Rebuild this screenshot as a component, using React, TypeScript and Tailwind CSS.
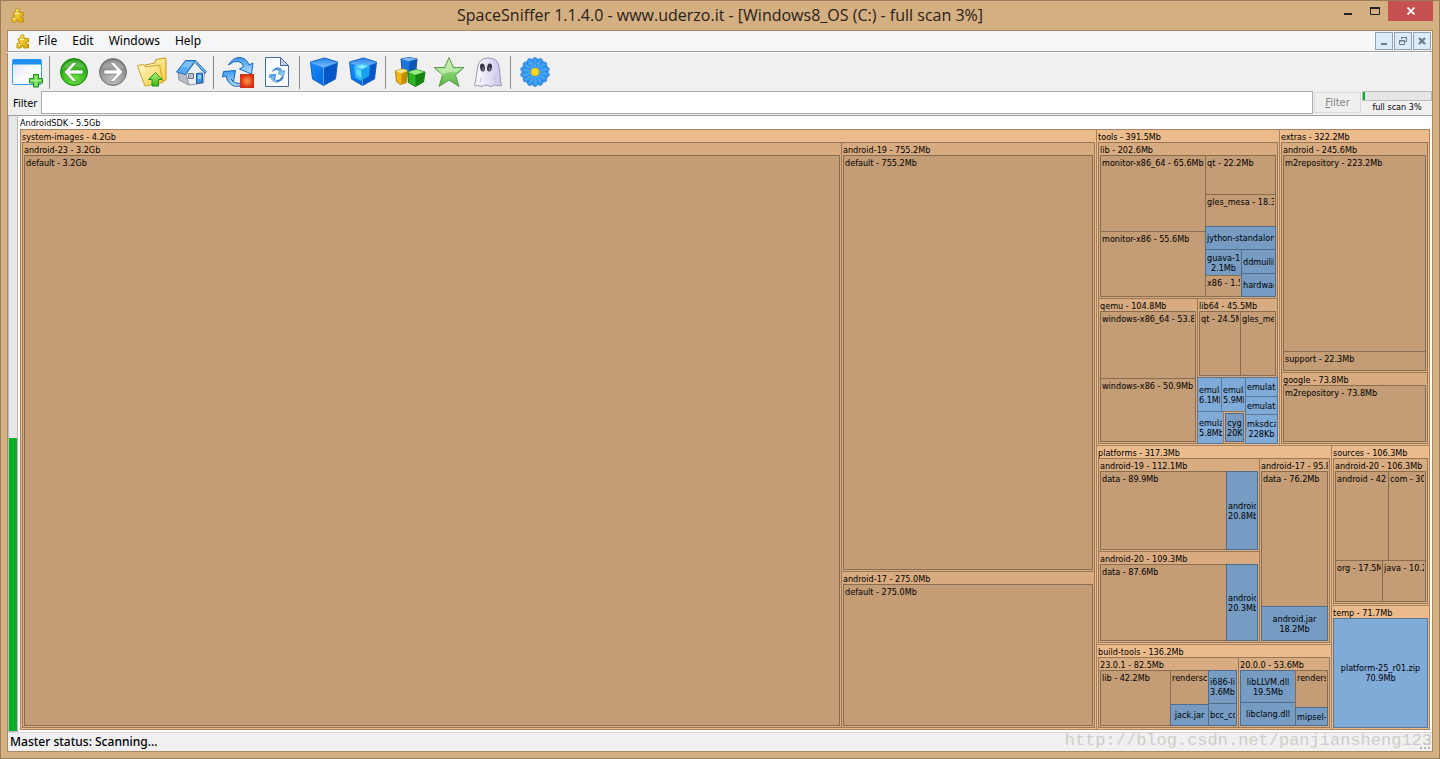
import type { ReactNode } from "react";

type MapNode = {
  size: number;
  name?: string;
  lines?: string[];
  split?: "row" | "col";
  children?: MapNode[];
};

// plain container that only splits space, draws nothing
const row = (size: number, ...children: MapNode[]): MapNode => ({ size, split: "row", children });
const col = (size: number, ...children: MapNode[]): MapNode => ({ size, split: "col", children });
const folder = (size: number, name: string, ...children: MapNode[]): MapNode => ({ size, name, children });
const file = (size: number, ...lines: string[]): MapNode => ({ size, lines });

const tree = row(
  1,
  folder(
    1077,
    "system-images - 4.2Gb",
    row(
      1,
      folder(820, "android-23 - 3.2Gb", folder(1, "default - 3.2Gb")),
      col(
        254,
        folder(430, "android-19 - 755.2Mb", folder(1, "default - 755.2Mb")),
        folder(157, "android-17 - 275.0Mb", folder(1, "default - 275.0Mb")),
      ),
    ),
  ),
  col(
    334,
    row(
      317,
      folder(
        184,
        "tools - 391.5Mb",
        col(
          1,
          folder(
            157,
            "lib - 202.6Mb",
            row(
              1,
              col(106, folder(77, "monitor-x86_64 - 65.6Mb"), folder(66, "monitor-x86 - 55.6Mb")),
              col(
                71,
                folder(40, "qt - 22.2Mb"),
                folder(33, "gles_mesa - 18.3Mb"),
                file(24, "jython-standalone"),
                row(
                  48,
                  col(37, file(27, "guava-18", "2.1Mb"), folder(22, "x86 - 1.5Mb")),
                  col(35, file(25, "ddmuilib"), file(24, "hardware")),
                ),
              ),
            ),
          ),
          row(
            146,
            folder(
              100,
              "qemu - 104.8Mb",
              col(1, folder(68, "windows-x86_64 - 53.8Mb"), folder(64, "windows-x86 - 50.9Mb")),
            ),
            col(
              81,
              folder(80, "lib64 - 45.5Mb", row(1, folder(42, "qt - 24.5Mb"), folder(36, "gles_mesa"))),
              row(
                67,
                col(
                  49,
                  row(35, file(25, "emulator", "6.1Mb"), file(25, "emulator", "5.9Mb")),
                  row(33, file(27, "emulator", "5.8Mb"), folder(23, "", file(1, "cyg", "20Kb"))),
                ),
                col(33, file(20, "emulator"), file(19, "emulator"), file(30, "mksdcard", "228Kb")),
              ),
            ),
          ),
        ),
      ),
      folder(
        151,
        "extras - 322.2Mb",
        col(
          1,
          folder(
            231,
            "android - 245.6Mb",
            col(1, folder(197, "m2repository - 223.2Mb"), folder(20, "support - 22.3Mb")),
          ),
          folder(72, "google - 73.8Mb", folder(1, "m2repository - 73.8Mb")),
        ),
      ),
    ),
    row(
      285,
      col(
        236,
        folder(
          200,
          "platforms - 317.3Mb",
          row(
            1,
            col(
              162,
              folder(94, "android-19 - 112.1Mb", row(1, folder(127, "data - 89.9Mb"), file(32, "android", "20.8Mb"))),
              folder(92, "android-20 - 109.3Mb", row(1, folder(127, "data - 87.6Mb"), file(32, "android", "20.3Mb"))),
            ),
            folder(
              71,
              "android-17 - 95.8Mb",
              col(1, folder(136, "data - 76.2Mb"), file(35, "android.jar", "18.2Mb")),
            ),
          ),
        ),
        folder(
          86,
          "build-tools - 136.2Mb",
          row(
            1,
            folder(
              141,
              "23.0.1 - 82.5Mb",
              row(
                1,
                folder(71, "lib - 42.2Mb"),
                col(39, folder(35, "renderscript"), file(22, "jack.jar")),
                col(29, file(34, "i686-linux", "3.6Mb"), file(23, "bcc_compat")),
              ),
            ),
            folder(
              92,
              "20.0.0 - 53.6Mb",
              row(
                1,
                col(56, file(33, "libLLVM.dll", "19.5Mb"), file(24, "libclang.dll")),
                col(33, folder(38, "renderscript"), file(19, "mipsel-linux")),
              ),
            ),
          ),
        ),
      ),
      col(
        99,
        folder(
          161,
          "sources - 106.3Mb",
          folder(
            1,
            "android-20 - 106.3Mb",
            col(
              1,
              row(90, folder(54, "android - 42.6Mb"), folder(38, "com - 30.4Mb")),
              row(42, folder(48, "org - 17.5Mb"), folder(44, "java - 10.2Mb")),
            ),
          ),
        ),
        folder(125, "temp - 71.7Mb", file(1, "platform-25_r01.zip", "70.9Mb")),
      ),
    ),
  ),
);

const folderColors = [
  "bg-[#ebbb8c] border-[#a58362]",
  "bg-[#d8ac80] border-[#977959]",
  "bg-[#c49c75] border-[#896d51]",
];
const fileColors = [
  "bg-[#8cbbeb] border-[#6283a5]",
  "bg-[#80aad8] border-[#597797]",
  "bg-[#769cc4] border-[#516d89]",
];

const MapCell = ({ node, depth }: { node: MapNode; depth: number }) => {
  if (node.split) {
    const isRow = node.split === "row";
    return (
      <div className={`flex min-w-0 min-h-0 flex-1 ${isRow ? "flex-row" : "flex-col"}`}>
        {node.children?.map((child, index) => (
          <div
            key={index}
            className={`flex min-w-0 min-h-0 basis-0 ${index === 0 ? "" : isRow ? "-ml-px" : "-mt-px"}`}
            style={{ flexGrow: child.size }}
          >
            <MapCell node={child} depth={depth} />
          </div>
        ))}
      </div>
    );
  }

  if (node.lines) {
    return (
      <div className={`flex min-w-0 flex-1 flex-col justify-center border px-px text-center ${fileColors[depth]}`}>
        {node.lines.map((line) => (
          <div key={line} className="overflow-x-clip whitespace-nowrap leading-[10px]">
            {line}
          </div>
        ))}
      </div>
    );
  }

  return (
    <div className={`flex min-w-0 flex-1 flex-col border p-px pt-0 ${folderColors[depth]}`}>
      {node.name ? (
        <div className="h-3 shrink-0 overflow-x-clip whitespace-nowrap leading-[14px]">{node.name}</div>
      ) : (
        <div className="h-px shrink-0" />
      )}
      {node.children && (
        <div className="flex min-h-0 flex-1">
          {node.children.map((child, index) => (
            <MapCell key={index} node={child} depth={depth + 1} />
          ))}
        </div>
      )}
    </div>
  );
};

const Puzzle = () => (
  <svg width="14" height="15" viewBox="0 0 14 15">
    <path
      d="M5 1q2-1 3 .5v2.500l1 .5h3.500v3.500h-2.500v2h2.500v4h-5l-.5-2.500h-1.500l-.5 2.500h-4v-4.500h2.500v-2h-1v-3h1.500l.5-1z"
      fill="url(#gold)"
      stroke="#c2930f"
      strokeLinejoin="round"
    />
    <path d="M5.500 2h1.500M4 5.500h4M2 10.500h2" stroke="#fff6b0" />
  </svg>
);

const Defs = () => (
  <svg width="0" height="0" className="absolute" aria-hidden="true">
    <defs>
      <linearGradient id="gold" x1="0" y1="0" x2="1" y2="1">
        <stop offset="0" stopColor="#ffe95e" />
        <stop offset="1" stopColor="#d9a400" />
      </linearGradient>
      <linearGradient id="pane" x1="0" y1="0" x2="1" y2="1">
        <stop offset="0" stopColor="#d9dcf8" />
        <stop offset="0.6" stopColor="#ffffff" />
      </linearGradient>
      <radialGradient id="green" cx="0.5" cy="0.75" r="0.7">
        <stop offset="0" stopColor="#6ee33c" />
        <stop offset="1" stopColor="#1f9c10" />
      </radialGradient>
      <radialGradient id="gray" cx="0.5" cy="0.75" r="0.7">
        <stop offset="0" stopColor="#c4c4c4" />
        <stop offset="1" stopColor="#7d7d7d" />
      </radialGradient>
      <linearGradient id="folder" x1="0" y1="0" x2="1" y2="1">
        <stop offset="0" stopColor="#fffbd0" />
        <stop offset="1" stopColor="#f7c93a" />
      </linearGradient>
      <linearGradient id="lime" x1="0" y1="0" x2="0" y2="1">
        <stop offset="0" stopColor="#b6f27c" />
        <stop offset="1" stopColor="#38b616" />
      </linearGradient>
      <linearGradient id="star" x1="0" y1="0" x2="0" y2="1">
        <stop offset="0" stopColor="#c3eeb0" />
        <stop offset="1" stopColor="#52b83c" />
      </linearGradient>
      <linearGradient id="sky" x1="0" y1="0" x2="0" y2="1">
        <stop offset="0" stopColor="#3d97ee" />
        <stop offset="1" stopColor="#b4e0ff" />
      </linearGradient>
      <radialGradient id="red">
        <stop offset="0" stopColor="#ff9a4a" />
        <stop offset="1" stopColor="#e03010" />
      </radialGradient>
      <linearGradient id="cubeLeft" x1="0" y1="0" x2="1" y2="1">
        <stop offset="0" stopColor="#1a8dff" />
        <stop offset="1" stopColor="#0668dc" />
      </linearGradient>
      <linearGradient id="cubeTop" x1="0" y1="0" x2="0" y2="1">
        <stop offset="0" stopColor="#2783ea" />
        <stop offset="1" stopColor="#7cc2ff" />
      </linearGradient>
      <radialGradient id="glow">
        <stop offset="0" stopColor="#a5fbff" />
        <stop offset="1" stopColor="#28b5ff" />
      </radialGradient>
      <linearGradient id="ghost" x1="0" y1="0" x2="1" y2="0">
        <stop offset="0" stopColor="#ffffff" />
        <stop offset="1" stopColor="#c9c6ea" />
      </linearGradient>
    </defs>
  </svg>
);

const NewWindowIcon = () => (
  <>
    <rect x="1.500" y="3.500" width="29" height="25" rx="1" fill="url(#pane)" stroke="#3f9fe8" />
    <rect x="2" y="3" width="28" height="5" fill="#1f8ff2" />
    <path d="M2 8.500h28" stroke="#74c5ff" />
    <path d="M22.500 18.500h5v4h4v4.500h-4v4h-5v-4h-4v-4.500h4z" fill="#72d957" stroke="#1b8f14" />
    <path d="M25 20v9.500M20 24.700h10" stroke="#b2f29b" />
  </>
);

const BackIcon = () => (
  <>
    <circle cx="16" cy="16" r="13.500" fill="url(#green)" stroke="#168a12" />
    <path d="M4.500 13a12 12 0 0 1 23 0q-11-5-23 0" fill="#fff" opacity="0.2" />
    <path d="M15 6.500h4l-6.500 7.500h12.500v4h-12.500l6.500 7.500h-4l-9-9.500z" fill="#fff" stroke="#208b18" strokeWidth="0.600" />
  </>
);

const ForwardIcon = () => (
  <>
    <circle cx="16" cy="16" r="13.500" fill="url(#gray)" stroke="#747474" />
    <path d="M4.500 13a12 12 0 0 1 23 0q-11-5-23 0" fill="#fff" opacity="0.2" />
    <path d="M17 6.500h-4l6.500 7.500h-12.500v4h12.500l-6.500 7.500h4l9-9.500z" fill="#fff" stroke="#777" strokeWidth="0.600" />
  </>
);

const FolderUpIcon = () => (
  <>
    <path d="M9 9l10-2 1-3.500 9-1.500 1 2v20l-17 5z" fill="url(#folder)" stroke="#c9991c" />
    <path d="M1.500 9.500l6-1 2 2.500 14-2 3.500 17.500-18 3.500-5-13z" fill="url(#folder)" stroke="#d1a424" />
    <path d="M19.500 16.500l6.500 7h-3.500v6.500h-6.500v-6.500h-3.500z" fill="url(#lime)" stroke="#259218" />
  </>
);

const HomeIcon = () => (
  <>
    <path d="M3 15l8 3 3 11-10-5z" fill="#b9bec7" stroke="#8d939e" />
    <path d="M11 18l9.500-12.500 9 10.500-1 11-14.500 2z" fill="#eceef3" stroke="#9298a3" />
    <path d="M1.500 16l9-11.500h10l-10 14z" fill="#58aaf0" stroke="#1e68b8" strokeLinejoin="round" />
    <path d="M20.500 4.500l10.500 11-1 2-9.500-10.500" fill="#7bbcf5" stroke="#1e68b8" strokeLinejoin="round" />
    <path d="M11 6h7l-4 5.500-8-.5z" fill="#8ccbff" opacity="0.700" />
    <path d="M13.500 17.500h5v5h-5z" fill="#b9c2cc" stroke="#6b7785" />
    <path d="M21.500 17.500l6-.5v9.500l-6 1z" fill="#3c94e8" stroke="#1c5d9d" />
    <path d="M23 19l3-.3v4l-3 .3z" fill="#90ceff" />
  </>
);

const SyncArrows = () => (
  <>
    <path
      d="M6.500 9q4-7.500 11.500-7.500 6.500.5 9 7.500l4-2-1.500 11-12-5 4-2.500q-1-4-5-5-5-1-10 3.500z"
      fill="url(#sky)"
      stroke="#1565b8"
      strokeLinejoin="round"
    />
    <path
      d="M1.500 15.500l12-1-2 11-2.500-2.500q2 4 7 4.500l3-.5-1 3q-5 1.500-9-1.500-4-3-5-8.500l-3.500 1z"
      fill="url(#sky)"
      stroke="#1565b8"
      strokeLinejoin="round"
    />
  </>
);

const RescanIcon = () => (
  <>
    <SyncArrows />
    <rect x="18.500" y="18.500" width="13" height="13" fill="url(#red)" stroke="#c4341c" />
  </>
);

const RefreshPageIcon = () => (
  <>
    <path d="M4.500 1.500h15l8 8v21h-23z" fill="#f8fbff" stroke="#4d6a9c" />
    <path d="M19.500 1.500v8h8z" fill="#bccde8" stroke="#4d6a9c" />
    <g transform="translate(8 11) scale(0.500)">
      <SyncArrows />
      <path d="M16 28q8 0 12-9" stroke="#2c7dcc" strokeWidth="4" fill="none" />
    </g>
  </>
);

const CubeIcon = () => (
  <>
    <path d="M2.500 6l13 5v18.500l-11-6.500z" fill="url(#cubeLeft)" />
    <path d="M29.500 6l-14 5v18.500l12-6.500z" fill="#0557c8" />
    <path d="M2.500 6l14-4 13 4-14 5.500z" fill="url(#cubeTop)" />
    <path d="M2.500 6l14-4 13 4-2 17-12 6.500-11-6.500z" fill="none" stroke="#1263bf" strokeLinejoin="round" />
    <path d="M3 6.500l12.500 5 13.500-5M15.500 11.500v17" fill="none" stroke="#58adfc" strokeWidth="0.800" />
  </>
);

const GlowCubeIcon = () => (
  <>
    <CubeIcon />
    <path d="M7 10l7 3v12l-6-3.500z" fill="#31b8ff" />
    <path d="M14 14l9-4-1 10-8 5z" fill="#18a3f2" />
    <path d="M7 10l8-2.500 8 2.500-9 4z" fill="url(#glow)" />
    <path d="M9 12.500l5 2.500 1 7-5-3z" fill="#80f0ff" opacity="0.700" />
  </>
);

const BlocksIcon = () => (
  <>
    <path d="M7 3l8-1.500 8 1.500-1 10-7 2.500-7-2.500z" fill="#1c74dd" stroke="#164f9f" />
    <path d="M7 3l8-1.500 8 1.500-8 2.500z" fill="#7bb9fb" />
    <path d="M15 5.500v9.500l6.500-2.500 1-9z" fill="#0b55b8" />
    <path d="M1.500 15l8-2 4 1.500-1 12-6 2-4-3z" fill="#efb713" stroke="#a97c0a" />
    <path d="M1.500 15l8-2 4 1.500-6 3z" fill="#ffe888" />
    <path d="M7.500 17.500v10l5-2 1-10z" fill="#c48a05" />
    <path d="M14 16l8-2.500 9 2.500-1.500 10-8 4.500-7-4z" fill="#31b325" stroke="#167510" />
    <path d="M14 16l8-2.500 9 2.500-9.500 3z" fill="#98e984" />
    <path d="M21.500 19v11l8-4.500 1-9.500z" fill="#14830f" />
  </>
);

const StarIcon = () => (
  <>
    <path
      d="M16 1.500l4.500 10h10.500l-8.500 7.500 3.500 11.500-10-6.500-10 6.500 3.500-11.500-8.500-7.500h10.500z"
      fill="url(#star)"
      stroke="#5a9b4b"
      strokeLinejoin="round"
    />
    <path d="M16 4l3.500 8.500h8.500l-4 3.500q-9-1-15 3l-5-6.500h8.500z" fill="#e2fad0" opacity="0.500" />
  </>
);

const GhostIcon = () => (
  <>
    <path
      d="M5.500 12q1-10 11-10 10 0 11 11l1 13q2 3 .5 4l-6-1-4 1.500-5-1.500-5 1.500-3-1-3 .5q-1-2 .5-4z"
      fill="url(#ghost)"
      stroke="#9997b2"
    />
    <ellipse cx="10.500" cy="11.500" rx="2.400" ry="4" fill="#35323f" transform="rotate(-8 10.500 11.500)" />
    <ellipse cx="17.500" cy="11.500" rx="2.400" ry="4" fill="#35323f" transform="rotate(8 17.500 11.500)" />
    <ellipse cx="11" cy="13" rx="1" ry="2" fill="#73707c" />
    <ellipse cx="17.500" cy="13" rx="1" ry="2" fill="#73707c" />
    <path d="M22 19l2 8M9 22l-1 5" stroke="#c5c2e0" />
  </>
);

const petals = Array.from({ length: 14 }, (_, i) => (i * 360) / 14);

const FlowerIcon = () => (
  <>
    {petals.map((angle) => (
      <ellipse
        key={angle}
        cx="16"
        cy="7"
        rx="3.400"
        ry="5.600"
        fill="#3a9df4"
        stroke="#1769c4"
        strokeWidth="0.600"
        transform={`rotate(${angle} 16 16)`}
      />
    ))}
    <circle cx="16" cy="16" r="8" fill="#2c93ef" />
    {petals.map((angle) => (
      <path key={angle} d="M16 12V5" stroke="#71c2ff" strokeWidth="0.700" transform={`rotate(${angle} 16 16)`} />
    ))}
    <circle cx="16" cy="16" r="4" fill="#ffd91a" stroke="#d6a20b" strokeWidth="0.700" />
  </>
);

const toolGroups: { label: string; icon: () => ReactNode }[][] = [
  [{ label: "New view", icon: NewWindowIcon }],
  [
    { label: "Back", icon: BackIcon },
    { label: "Forward", icon: ForwardIcon },
    { label: "Up one level", icon: FolderUpIcon },
    { label: "Home", icon: HomeIcon },
  ],
  [
    { label: "Stop scan", icon: RescanIcon },
    { label: "Refresh", icon: RefreshPageIcon },
  ],
  [
    { label: "Less detail", icon: CubeIcon },
    { label: "More detail", icon: GlowCubeIcon },
  ],
  [
    { label: "File classes", icon: BlocksIcon },
    { label: "Tags", icon: StarIcon },
    { label: "Unknown space", icon: GhostIcon },
  ],
  [{ label: "Configure", icon: FlowerIcon }],
];

const menus = ["File", "Edit", "Windows", "Help"];

const TitleBar = () => (
  <header className="relative flex h-[29px] shrink-0 items-start">
    <span className="pl-[10px] pt-[7px]">
      <Puzzle />
    </span>
    <h1 className="absolute inset-x-0 top-0 text-center font-['Open_Sans','Noto_Sans',sans-serif] text-[16px] leading-7 text-[#2a2118]">
      SpaceSniffer 1.1.4.0 - www.uderzo.it - [Windows8_OS (C:) - full scan 3%]
    </h1>
    <div className="relative ml-auto mr-[6px] flex">
      <button aria-label="Minimize" className="flex h-5 w-[27px] items-center justify-center">
        <svg width="10" height="10" viewBox="0 0 10 10">
          <path d="M1 8h8" stroke="#222" strokeWidth="2" />
        </svg>
      </button>
      <button aria-label="Maximize" className="flex h-5 w-[27px] items-center justify-center">
        <svg width="10" height="8" viewBox="0 0 10 8">
          <path d="M0.500 1v6.500h9V1" fill="none" stroke="#222" />
          <path d="M0 1h10" stroke="#222" strokeWidth="2" />
        </svg>
      </button>
      <button aria-label="Close" className="flex h-5 w-[45px] items-center justify-center bg-[#c75050]">
        <svg width="8" height="8" viewBox="0 0 8 8">
          <path d="M0.500 0.500l7 7M7.500 0.500l-7 7" stroke="#fff" strokeWidth="1.800" />
        </svg>
      </button>
    </div>
  </header>
);

const childButton = "flex size-[18px] items-center justify-center border border-[#93a2b2] bg-[#dcebf8] text-[#6b7a89]";

const MenuBar = () => (
  <nav className="flex h-5 shrink-0 items-center bg-[#f5f6f8] pl-2 pr-px">
    <Puzzle />
    <div className="flex gap-[15px] pl-2 text-[12px] leading-5">
      {menus.map((menu) => (
        <button key={menu}>{menu}</button>
      ))}
    </div>
    <div className="ml-auto flex gap-px">
      <button aria-label="Minimize view" className={childButton}>
        <svg width="10" height="10" viewBox="0 0 10 10">
          <path d="M2 8h6" stroke="currentColor" strokeWidth="2" />
        </svg>
      </button>
      <button aria-label="Restore view" className={childButton}>
        <svg width="10" height="10" viewBox="0 0 10 10">
          <path d="M3.500 3V1.500h5v4H7M3 1.500h6M1.500 4.500h5v4h-5zM1 5h6" fill="none" stroke="currentColor" />
        </svg>
      </button>
      <button aria-label="Close view" className={childButton}>
        <svg width="10" height="10" viewBox="0 0 10 10">
          <path d="M2 2l6 6M8 2L2 8" stroke="currentColor" strokeWidth="2.200" />
        </svg>
      </button>
    </div>
  </nav>
);

const Toolbar = () => (
  <div className="-ml-px flex h-[39px] shrink-0 border-t border-white">
    {toolGroups.map((group, index) => (
      <div key={index} className="flex items-center">
        {index > 0 && <div className="ml-[3px] mr-1 h-[33px] w-px bg-[#8a8a8a]" />}
        {group.map(({ label, icon: Icon }) => (
          <button key={label} aria-label={label} className="flex h-full w-[39px] items-center justify-center">
            <svg width="32" height="32" viewBox="0 0 32 32" fill="none">
              <Icon />
            </svg>
          </button>
        ))}
      </div>
    ))}
  </div>
);

const FilterBar = () => (
  <form className="flex h-[25px] shrink-0 items-start border-b border-[#a0a0a0] font-['DejaVu_Sans_Condensed','DejaVu_Sans',sans-serif]">
    <label htmlFor="filter" className="w-[33px] pl-[5px] text-[11px] leading-[25px]">
      Filter
    </label>
    <input id="filter" className="h-[23px] min-w-0 flex-1 border border-[#ababab] bg-white px-1 text-[11px] outline-none" />
    <button
      type="button"
      disabled
      className="ml-px mt-px h-[21px] w-[47px] border border-[#d9d9d9] bg-[#efefef] text-[11px] leading-[19px] text-[#838383]"
    >
      <span className="underline">F</span>ilter
    </button>
    <div className="ml-px w-[70px]">
      <div role="progressbar" aria-label="Scan progress" aria-valuenow={3} className="h-[10px] border border-[#bcbcbc] bg-[#e6e6e6]">
        <div className="h-full w-[3%] bg-[#06b025]" />
      </div>
      <div className="text-center text-[9px] leading-[13px]">full scan 3%</div>
    </div>
  </form>
);

const App = () => {
  return (
    <div className="flex h-screen flex-col overflow-hidden border border-[#9c7e5c] bg-[#d3af82] font-['Noto_Sans','Open_Sans',sans-serif] text-black">
      <Defs />
      <TitleBar />
      <div className="mx-[6px] mb-[6px] flex min-h-0 flex-1 flex-col border border-[#a98961] bg-[#f0f0f0]">
        <MenuBar />
        <div className="h-px shrink-0 bg-[#a0a0a0]" />
        <Toolbar />
        <FilterBar />
        <main className="flex min-h-0 flex-1 bg-white">
          <div
            role="progressbar"
            aria-label="View progress"
            aria-valuenow={48}
            className="flex w-[10px] flex-col justify-end border border-t-0 border-[#bcbcbc] bg-[#e6e6e6]"
          >
            <div className="h-[47.6%] bg-[#06b025]" />
          </div>
          <div className="flex min-w-0 flex-1 flex-col pb-[2px] pl-[2px] pr-[2px] font-['DejaVu_Sans_Condensed','DejaVu_Sans',sans-serif] text-[9px]">
            <div className="h-[13px] shrink-0 leading-[15px]">AndroidSDK - 5.5Gb</div>
            <div className="flex min-h-0 flex-1">
              <MapCell node={tree} depth={0} />
            </div>
          </div>
        </main>
        <footer className="relative flex h-[19px] shrink-0 items-center border-t border-[#d7d7d7] pl-[2px] text-[12px] leading-5 font-medium">
          Master status: Scanning...
          <svg className="absolute bottom-px right-px" width="11" height="11" viewBox="0 0 11 11" fill="#b5b5b5">
            <path d="M8 0h2v2h-2zM4 4h2v2h-2zM8 4h2v2h-2zM0 8h2v2h-2zM4 8h2v2h-2zM8 8h2v2h-2z" />
          </svg>
          <span className="absolute -top-0.5 right-0 font-['Liberation_Mono',monospace] text-[17px] leading-5 font-normal text-[#cdcdc8]">
            http://blog.csdn.net/panjiansheng123
          </span>
        </footer>
      </div>
    </div>
  );
};

export default App;
